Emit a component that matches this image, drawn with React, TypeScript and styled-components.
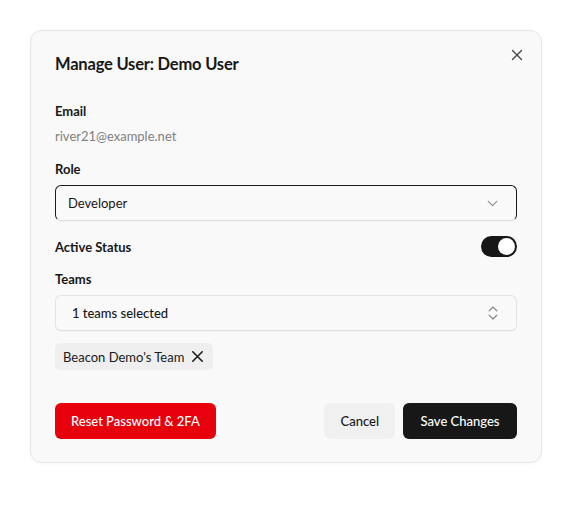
import React from 'react';
import styled, { createGlobalStyle } from 'styled-components';

const GlobalStyle = createGlobalStyle`
	* {
		box-sizing: border-box;
	}

	body {
		margin: 0;
		background: #ffffff;
		font-family: Lato, 'Noto Sans', sans-serif;
		color: #171717;
	}
`;

const Page = styled.div`
	width: 584px;
	height: 506px;
	padding: 30px 42px 0 30px;
`;

const Dialog = styled.div`
	position: relative;
	width: 512px;
	background: #f9f9f9;
	border: 1px solid #e6e6e6;
	border-radius: 12px;
	padding: 22px 24px 23px;
	box-shadow: 0 1px 3px rgba(0, 0, 0, 0.04);
`;

const Title = styled.h2`
	margin: 0;
	font-size: 16.5px;
	font-weight: 700;
	line-height: 22px;
	letter-spacing: -0.2px;
`;

const CloseButton = styled.button`
	position: absolute;
	top: 14px;
	right: 14px;
	width: 20px;
	height: 20px;
	padding: 0;
	border: none;
	background: none;
	color: #444;
	display: flex;
	align-items: center;
	justify-content: center;
`;

const Form = styled.div`
	margin-top: 27px;
	display: flex;
	flex-direction: column;
`;

const Field = styled.div`
	display: flex;
	flex-direction: column;
	gap: 7px;
	margin-bottom: 15px;
`;

const Label = styled.div`
	font-size: 13px;
	font-weight: 700;
	line-height: 18px;
`;

const Value = styled.div`
	font-size: 13px;
	color: #808080;
	line-height: 18px;
`;

const Select = styled.div<{ $focused?: boolean }>`
	height: 36px;
	display: flex;
	align-items: center;
	justify-content: space-between;
	padding: 0 ${(p) => (p.$focused ? 15 : 14)}px 0 ${(p) => (p.$focused ? 12 : 16)}px;
	border-radius: 6px;
	border: 1px solid ${(p) => (p.$focused ? '#1a1a1a' : '#e3e3e3')};
	border-bottom-color: #e0e0e0;
	background: #f9f9f9;
	font-size: 13px;
	font-weight: ${(p) => (p.$focused ? 400 : 500)};
	color: #171717;
	box-shadow: 0 1px 1px rgba(0, 0, 0, 0.03);
`;

const SwitchRow = styled.div`
	display: flex;
	align-items: center;
	justify-content: space-between;
	margin-bottom: 13px;
`;

const Switch = styled.div`
	width: 36px;
	height: 21px;
	border-radius: 11px;
	background: #171717;
	padding: 2px;
	display: flex;
	justify-content: flex-end;
`;

const Thumb = styled.div`
	width: 17px;
	height: 17px;
	border-radius: 50%;
	background: #ffffff;
`;

const Badges = styled.div`
	display: flex;
	margin-top: -3px;
`;

const Badge = styled.div`
	display: flex;
	align-items: center;
	gap: 4px;
	height: 27px;
	padding: 0 6px 0 8px;
	border-radius: 5px;
	background: #efefef;
	font-size: 13px;
	color: #1a1a1a;
`;

const Footer = styled.div`
	margin-top: 33px;
	display: flex;
	align-items: center;
`;

const Spacer = styled.div`
	flex: 1;
`;

const Button = styled.button<{ $variant: 'danger' | 'ghost' | 'primary' }>`
	height: 36px;
	padding: 0 ${(p) => (p.$variant === 'primary' ? 17.5 : 16)}px;
	border: none;
	border-radius: 6px;
	font-family: inherit;
	font-size: 13px;
	font-weight: 500;
	background: ${(p) =>
		p.$variant === 'danger' ? '#e7000b' : p.$variant === 'primary' ? '#171717' : '#f0f0f0'};
	color: ${(p) => (p.$variant === 'ghost' ? '#171717' : '#ffffff')};
	margin-left: ${(p) => (p.$variant === 'primary' ? 8 : 0)}px;
`;

function XIcon({ size, width }: { size: number; width: number }) {
	return (
		<svg width={size} height={size} viewBox="0 0 24 24" fill="none" stroke="currentColor" strokeWidth={width} strokeLinecap="round">
			<path d="M18 6 6 18M6 6l12 12" />
		</svg>
	);
}

function ChevronDown() {
	return (
		<svg width="17" height="17" viewBox="0 0 24 24" fill="none" stroke="#8a8a8a" strokeWidth={1.6} strokeLinecap="round" strokeLinejoin="round">
			<path d="m6 9 6 6 6-6" />
		</svg>
	);
}

function ChevronsUpDown() {
	return (
		<svg width="18" height="18" viewBox="0 0 24 24" fill="none" stroke="#8a8a8a" strokeWidth={1.6} strokeLinecap="round" strokeLinejoin="round">
			<path d="m7 15 5 5 5-5" />
			<path d="m7 9 5-5 5 5" />
		</svg>
	);
}

export default function App() {
	return (
		<Page>
			<GlobalStyle />
			<Dialog>
				<Title>Manage User: Demo User</Title>
				<CloseButton aria-label="Close">
					<XIcon size={18} width={1.8} />
				</CloseButton>

				<Form>
					<Field>
						<Label>Email</Label>
						<Value>river21@example.net</Value>
					</Field>

					<Field>
						<Label>Role</Label>
						<Select $focused>
							<span>Developer</span>
							<ChevronDown />
						</Select>
					</Field>

					<SwitchRow>
						<Label>Active Status</Label>
						<Switch>
							<Thumb />
						</Switch>
					</SwitchRow>

					<Field>
						<Label>Teams</Label>
						<Select>
							<span>1 teams selected</span>
							<ChevronsUpDown />
						</Select>
					</Field>

					<Badges>
						<Badge>
							Beacon Demo's Team
							<XIcon size={19} width={2} />
						</Badge>
					</Badges>
				</Form>

				<Footer>
					<Button $variant="danger">Reset Password &amp; 2FA</Button>
					<Spacer />
					<Button $variant="ghost">Cancel</Button>
					<Button $variant="primary">Save Changes</Button>
				</Footer>
			</Dialog>
		</Page>
	);
}
